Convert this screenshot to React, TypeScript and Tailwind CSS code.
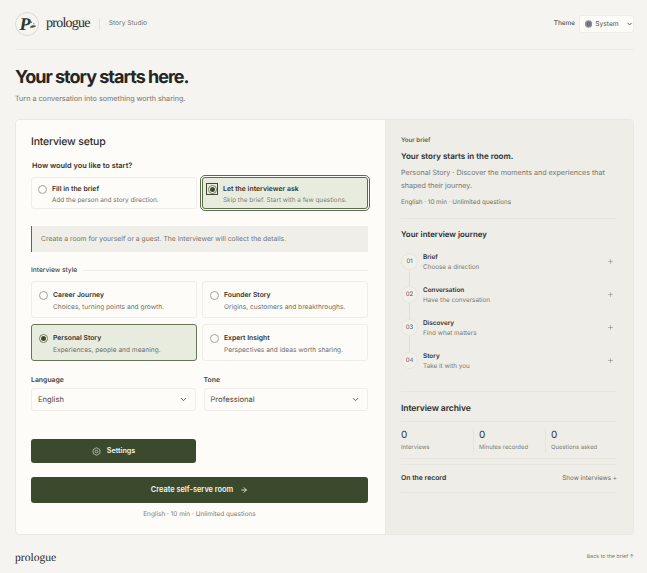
import { ArrowRight, ChevronDown, Plus } from "lucide-react";

const sans = "font-['Inter','Liberation_Sans',sans-serif] [text-rendering:geometricPrecision]";

function Radio({ on = false }: { on?: boolean }) {
  return (
    <span
      className={`flex h-[9px] w-[9px] shrink-0 items-center justify-center rounded-full border bg-[#fdfcf8] ${
        on ? "border-[#6b7a5c]" : "border-[#a5a5a0]"
      }`}
    >
      {on && <span className="h-[5px] w-[5px] rounded-full bg-[#3d4a2c]" />}
    </span>
  );
}

function StyleCard({ title, sub, on = false }: { title: string; sub: string; on?: boolean }) {
  return (
    <div
      className={`flex h-[37px] items-start gap-[5px] rounded-[3px] border pl-[7px] pt-[8px] ${
        on ? "border-[#67745a] bg-[#e8ecdf]" : "border-[#eeede8] bg-[#fdfcf8]"
      }`}
    >
      <span className="mt-[1px]">
        <Radio on={on} />
      </span>
      <div>
        <div className="text-[6.8px] leading-[10px] font-semibold text-[#33332f]">{title}</div>
        <div className="mt-[2px] text-[6.6px] leading-[10px] text-[#6f6f68]">{sub}</div>
      </div>
    </div>
  );
}

function SelectBox({ value }: { value: string }) {
  return (
    <div className="flex h-[23px] items-center justify-between rounded-[3px] border border-[#eeede8] bg-[#fdfcf8] pl-[6px] pr-[7px] text-[7.6px] text-[#4b4b46]">
      {value}
      <ChevronDown className="h-[9px] w-[9px] text-[#33332f]" strokeWidth={2} />
    </div>
  );
}

function Step({ n, title, sub, last = false }: { n: string; title: string; sub: string; last?: boolean }) {
  return (
    <div className="relative flex h-[33px] items-start">
      <span className="flex h-[17px] w-[17px] shrink-0 items-center justify-center rounded-full border border-[#e6e5df] bg-[#f0efea] text-[6px] text-[#55554f]">
        {n}
      </span>
      {!last && <span className="absolute left-[8px] top-[17px] h-[16px] w-px bg-[#e0dfd8]" />}
      <div className="ml-[5px] flex-1 -mt-[1px]">
        <div className="text-[6.4px] leading-[10px] font-semibold text-[#33332f]">{title}</div>
        <div className="text-[6.35px] leading-[10px] text-[#7c7c75]">{sub}</div>
      </div>
      <Plus className="mr-[3px] mt-[5px] h-[7px] w-[7px] text-[#6f6f68]" strokeWidth={1.5} />
    </div>
  );
}

function Stat({ value, label, border = false }: { value: string; label: string; border?: boolean }) {
  return (
    <div className={`${border ? "border-l border-[#e4e3dd] pl-[5px]" : ""}`}>
      <div className="text-[10px] leading-[13px] text-[#33332f]">{value}</div>
      <div className="mt-[1px] text-[5.9px] leading-[9px] text-[#7c7c75]">{label}</div>
    </div>
  );
}

export default function App() {
  return (
    <div className={`${sans} h-[573px] w-[647px] overflow-hidden bg-[#f5f4f0] pl-[15px] pr-[13px] text-[#262622]`}>
      {/* Top bar */}
      <header className="flex h-[50px] items-center justify-between border-b border-[#eeede8] pb-[1px]">
        <div className="flex items-center">
          <span className="relative flex h-[24px] w-[24px] items-center justify-center rounded-full border border-[#d9d8d0] bg-[#f6f5f0] pr-[4px] font-['Liberation_Serif',serif] text-[18px] leading-none font-bold italic text-[#2b3a26]">
            P
            <svg viewBox="0 0 10 10" className="absolute left-[13px] top-[8px] h-[8px] w-[8px]">
              <circle cx="3" cy="1.5" r="0.8" fill="#2b3a26" />
              <circle cx="6" cy="3.5" r="0.7" fill="#2b3a26" />
              <path d="M1 8 C3 5 6 5 9 6 C7 8.5 4 9 1 8Z" fill="#4a5a3a" />
            </svg>
          </span>
          <span className="ml-[7px] font-['Liberation_Serif',serif] text-[14px] leading-none tracking-[-0.75px] text-[#2a2a26]">
            prologue
          </span>
          <span className="ml-[9px] h-[11px] w-px bg-[#e2e1da]" />
          <span className="ml-[9px] text-[6.6px] text-[#77776f]">Story Studio</span>
        </div>
        <div className="flex items-center gap-[4px]">
          <span className="text-[6.4px] font-medium text-[#55554f]">Theme</span>
          <div className="flex h-[18px] w-[55px] items-center rounded-[3px] border border-[#eeede8] bg-[#fdfcf8] pl-[5px] text-[6.7px] text-[#55554f]">
            <svg viewBox="0 0 10 10" className="h-[8px] w-[8px]">
              <circle cx="5" cy="5" r="5" fill="#8b8d96" />
              <circle cx="5" cy="5" r="2.2" fill="none" stroke="#4c4e56" strokeWidth="1" />
            </svg>
            <span className="ml-[3px]">System</span>
            <ChevronDown className="ml-[7px] h-[8px] w-[8px] text-[#33332f]" strokeWidth={2.5} />
          </div>
        </div>
      </header>

      <h1 className="mt-[17px] text-[18px] leading-[22px] font-bold tracking-[-1px] text-[#262622]">
        Your story starts here.
      </h1>
      <p className="mt-[4px] text-[7.2px] leading-[12px] text-[#73736c]">Turn a conversation into something worth sharing.</p>

      {/* Main card */}
      <main className="mt-[14px] flex h-[416px] overflow-hidden rounded-[4px] border border-[#e9e8e2] bg-[#fdfcf8]">
        <section className="w-[369px] shrink-0 pl-[15px] pr-[17px]">
          <h2 className="mt-[14px] text-[10.5px] leading-[16px] font-medium tracking-[-0.2px] text-[#2c2c28]">Interview setup</h2>
          <div className="mt-[10px] pl-px text-[7.4px] leading-[12px] font-semibold text-[#33332f]">How would you like to start?</div>

          <div className="mt-[5px] grid grid-cols-2 gap-[5px]">
            <div className="flex h-[32px] items-start gap-[5px] rounded-[3px] border border-[#eeede8] bg-[#fdfcf8] pl-[6px] pt-[6px]">
              <span className="mt-[1px]">
                <Radio />
              </span>
              <div>
                <div className="text-[6.9px] leading-[10px] font-semibold text-[#33332f]">Fill in the brief</div>
                <div className="mt-px text-[6.4px] leading-[10px] text-[#6f6f68]">Add the person and story direction.</div>
              </div>
            </div>
            <div className="flex h-[32px] items-start gap-[5px] rounded-[3px] border border-[#5c6a4e] bg-[#e8ecdf] pl-[3px] pt-[5px] outline outline-offset-[1px] outline-[#5c6a4e]">
              <span className="flex h-[12px] w-[12px] items-center justify-center border border-[#3d4a2c]">
                <Radio on />
              </span>
              <div className="mt-px">
                <div className="text-[6.9px] leading-[10px] font-semibold text-[#33332f]">Let the interviewer ask</div>
                <div className="mt-px text-[6.4px] leading-[10px] text-[#7c8074]">Skip the brief. Start with a few questions.</div>
              </div>
            </div>
          </div>

          <div className="mt-[17px] flex h-[26px] items-center border-l border-[#5c6a4e] bg-[#efeee9] pl-[9px] text-[6.8px] text-[#73736c]">
            Create a room for yourself or a guest. The interviewer will collect the details.
          </div>

          <div className="mt-[13px] flex items-center gap-[6px]">
            <span className="text-[6.6px] leading-[10px] font-medium text-[#44443f]">Interview style</span>
            <span className="h-px flex-1 bg-[#eeede8]" />
          </div>

          <div className="mt-[6px] grid grid-cols-2 gap-x-[5px] gap-y-[6px]">
            <StyleCard title="Career Journey" sub="Choices, turning points and growth." />
            <StyleCard title="Founder Story" sub="Origins, customers and breakthroughs." />
            <StyleCard title="Personal Story" sub="Experiences, people and meaning." on />
            <StyleCard title="Expert Insight" sub="Perspectives and ideas worth sharing." />
          </div>

          <div className="mt-[14px] grid grid-cols-2 gap-[8px]">
            <div>
              <div className="mb-[3px] text-[6.9px] leading-[10px] font-semibold text-[#44443f]">Language</div>
              <SelectBox value="English" />
            </div>
            <div>
              <div className="mb-[3px] text-[6.9px] leading-[10px] font-semibold text-[#44443f]">Tone</div>
              <SelectBox value="Professional" />
            </div>
          </div>

          <button className="mt-[28px] flex h-[24px] w-[165px] items-center justify-center gap-[6px] rounded-[3px] bg-[#3b4a2c] text-[7.2px] font-semibold text-[#f3f3ea]">
            <svg viewBox="0 0 24 24" fill="none" stroke="currentColor" strokeWidth="1.6" className="h-[9px] w-[9px]">
              <path d="M12 2 21 7v10l-9 5-9-5V7z" />
              <circle cx="12" cy="12" r="3.5" />
            </svg>
            Settings
          </button>

          <button className="mt-[14px] flex h-[26px] w-full items-center justify-center gap-[7px] rounded-[3px] bg-[#3b4a2c] text-[7.4px] font-semibold text-[#f3f3ea]">
            Create self-serve room
            <ArrowRight className="h-[8px] w-[8px]" strokeWidth={2.5} />
          </button>
          <p className="mt-[6px] text-center text-[6.45px] leading-[10px] text-[#7c7c75]">English · 10 min · Unlimited questions</p>
        </section>

        {/* Brief sidebar */}
        <aside className="flex-1 border-l border-[#e9e8e2] bg-[#eeede8] pl-[15px] pr-[16px]">
          <div className="mt-[16px] text-[6.2px] leading-[9px] font-semibold text-[#5b6350]">Your brief</div>
          <h3 className="mt-[5px] text-[8px] leading-[12px] font-semibold text-[#2c2c28]">Your story starts in the room.</h3>
          <p className="mt-[5px] text-[7.15px] leading-[12.5px] text-[#77776f]">
            Personal Story · Discover the moments and experiences that shaped their journey.
          </p>
          <p className="mt-[5px] text-[6.3px] leading-[10px] text-[#6b7162]">English · 10 min · Unlimited questions</p>
          <div className="mt-[11px] h-px bg-[#e6e5df]" />
          <h3 className="mt-[9px] text-[7.9px] leading-[12px] font-semibold text-[#2c2c28]">Your interview journey</h3>

          <div className="mt-[13px]">
            <Step n="01" title="Brief" sub="Choose a direction" />
            <Step n="02" title="Conversation" sub="Have the conversation" />
            <Step n="03" title="Discovery" sub="Find what matters" />
            <Step n="04" title="Story" sub="Take it with you" last />
          </div>

          <div className="mt-[6px] h-px bg-[#e6e5df]" />
          <h3 className="mt-[11px] text-[8.6px] leading-[13px] font-semibold tracking-[-0.1px] text-[#2c2c28]">Interview archive</h3>
          <div className="mt-[5px] h-px bg-[#e6e5df]" />
          <div className="mt-[7px] grid grid-cols-[72px_72px_1fr] pb-[6px]">
            <Stat value="0" label="Interviews" />
            <Stat value="0" label="Minutes recorded" border />
            <Stat value="0" label="Questions asked" border />
          </div>
          <div className="h-px bg-[#e6e5df]" />
          <div className="mt-[5px] flex h-[29px] items-center justify-between border-y border-[#e6e5df]">
            <span className="text-[6.85px] font-semibold text-[#33332f]">On the record</span>
            <span className="text-[6.3px] text-[#6b7162]">Show interviews +</span>
          </div>
        </aside>
      </main>

      <footer className="mt-[16px] flex items-center justify-between">
        <span className="font-['Liberation_Serif',serif] text-[11.6px] leading-[14px] text-[#2a2a26]">prologue</span>
        <span className="text-[5.3px] text-[#77776f]">Back to the brief ↑</span>
      </footer>
    </div>
  );
}
